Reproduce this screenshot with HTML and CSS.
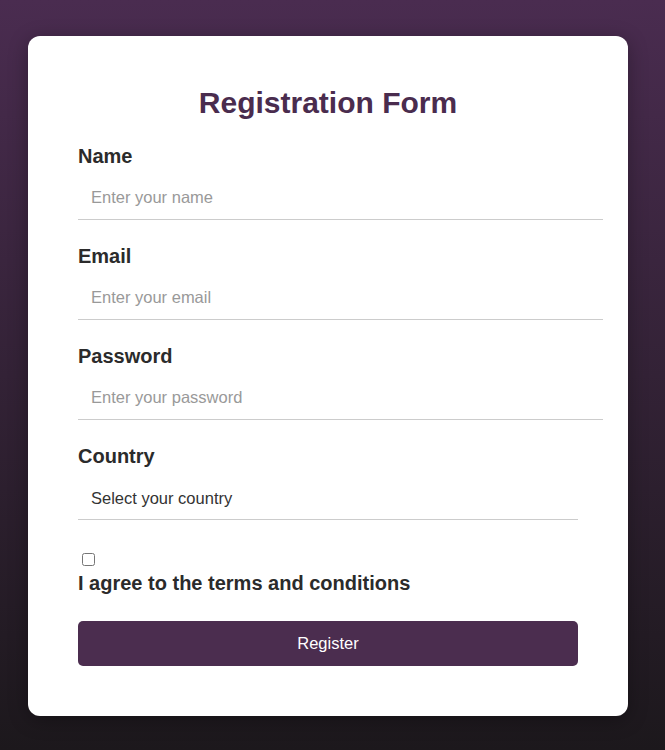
FILE: index.html
```html
<!DOCTYPE html>
<html lang="en">
<head>
<meta charset="utf-8">
<title>Registration Form</title>
<link rel="stylesheet" href="styles.css">
</head>
<body>
<div class="card">
  <h2 class="title">Registration Form</h2>
  <form class="form">
    <div class="group">
      <label class="label" for="name">Name</label>
      <input class="field" id="name" type="text" placeholder="Enter your name">
    </div>
    <div class="group">
      <label class="label" for="email">Email</label>
      <input class="field" id="email" type="email" placeholder="Enter your email">
    </div>
    <div class="group">
      <label class="label" for="password">Password</label>
      <input class="field" id="password" type="password" placeholder="Enter your password">
    </div>
    <div class="group">
      <label class="label" for="country">Country</label>
      <select class="select" id="country">
        <option>Select your country</option>
      </select>
    </div>
    <div class="group check-group">
      <input class="check" id="terms" type="checkbox">
      <label class="label" for="terms">I agree to the terms and conditions</label>
    </div>
    <button class="btn" type="button">Register</button>
  </form>
</div>
</body>
</html>
```
FILE: styles.css
```css
html {
  min-height: 100%;
  background: linear-gradient(to bottom, #4a2c50, #1c181c);
}
body {
  margin: 0;
  padding: 36px 0 34px 28px;
  font-family: "Liberation Sans", Arial, sans-serif;
}
.card {
  width: 500px;
  height: 580px;
  padding: 50px;
  background: #fff;
  border-radius: 12px;
  box-shadow: 0 4px 20px rgba(0, 0, 0, 0.3);
}
.title {
  margin: 0 0 25px;
  text-align: center;
  font-size: 30px;
  line-height: 34px;
  color: #4a2c4e;
}
.group {
  margin-bottom: 25px;
}
.label {
  display: block;
  margin-bottom: 8px;
  font-size: 20px;
  line-height: 23px;
  font-weight: bold;
  color: #2b2b2b;
}
.field {
  width: 100%;
  height: 19px;
  padding: 12px 12px 12px 13px;
  border: none;
  border-bottom: 1px solid #ccc;
  font-family: "Liberation Sans", Arial, sans-serif;
  font-size: 16.5px;
  color: #333;
  outline: none;
}
.field::placeholder {
  color: #999;
}
.select {
  display: block;
  width: 100%;
  height: 44px;
  padding: 12px 12px 12px 13px;
  border: none;
  border-bottom: 1px solid #ccc;
  font-family: "Liberation Sans", Arial, sans-serif;
  font-size: 16.5px;
  color: #333;
  background: #fff;
  appearance: none;
  -webkit-appearance: none;
  outline: none;
}
.check-group {
  padding-top: 8px;
  margin-bottom: 26px;
}
.check-group .label {
  margin-bottom: 0;
}
.check {
  display: block;
  width: 13px;
  height: 13px;
  margin: 0 0 6px 4px;
}
.btn {
  display: block;
  width: 100%;
  height: 45px;
  border: none;
  border-radius: 5px;
  background: #4b2d4f;
  color: #fff;
  font-family: "Liberation Sans", Arial, sans-serif;
  font-size: 16.5px;
}
```
